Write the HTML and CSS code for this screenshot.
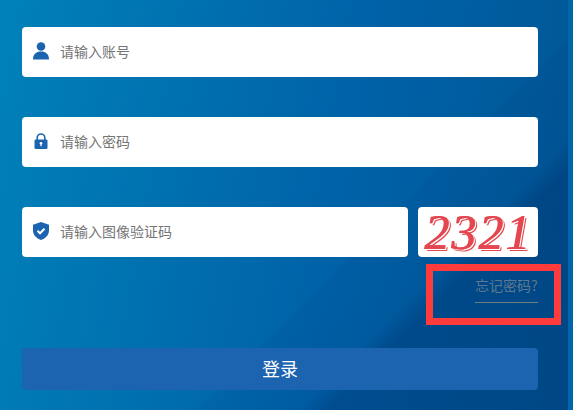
FILE: index.html
```html
<!DOCTYPE html>
<html lang="zh">
<head>
<meta charset="utf-8">
<title>登录</title>
<link rel="stylesheet" href="styles.css">
</head>
<body>
<form class="login">
  <div class="field">
    <svg class="icon" viewBox="0 0 16 18" width="16" height="18"><circle cx="8" cy="4.500" r="4.300"/><path d="M0 17.500C0 12 3.500 9.600 8 9.600s8 2.400 8 7.900z"/></svg>
    <span class="ph">请输入账号</span>
  </div>
  <div class="field">
    <svg class="icon" viewBox="0 0 14 16" width="14" height="16"><path d="M2.400 7V4.800a4.600 4.600 0 0 1 9.200 0V7h-1.600V4.800a3 3 0 0 0-6 0V7z"/><rect x="0.500" y="6.500" width="13" height="9.500" rx="1.200"/><circle cx="7" cy="10.200" r="1.300" fill="#fff"/><rect x="6.400" y="10.200" width="1.200" height="3" fill="#fff"/></svg>
    <span class="ph">请输入密码</span>
  </div>
  <div class="captcha-row">
    <div class="field field-code">
      <svg class="icon" viewBox="0 0 16 18" width="16" height="18"><path d="M8 0l8 2.800v5.400c0 4.600-3.200 8-8 9.800-4.800-1.800-8-5.200-8-9.800V2.800z"/><path class="tick" d="M4.500 8.800l2.500 2.500 4.500-4.500"/></svg>
      <span class="ph">请输入图像验证码</span>
    </div>
    <div class="captcha"><span class="digits">2321</span></div>
  </div>
  <div class="forgot-row">
    <div class="forgot-mark"><a class="forgot">忘记密码?</a></div>
  </div>
  <button class="submit" type="button">登录</button>
</form>
</body>
</html>
```
FILE: styles.css
```css
* { box-sizing: border-box; }
html, body { height: 100%; }
body {
  margin: 0;
  overflow: hidden;
  position: relative;
  background:
    linear-gradient(135deg, transparent 61.500%, rgba(0, 60, 130, 0.1) 62%, rgba(0, 50, 120, 0.12) 72%, rgba(0, 30, 90, 0.3) 75%, rgba(0, 30, 90, 0.25) 100%),
    linear-gradient(100deg, #0081b9 0%, #0072b0 28%, #0062a8 58%, #005593 100%);
  font-family: "Noto Sans CJK SC", "Liberation Sans", sans-serif;
}
body::after {
  content: "";
  position: absolute;
  top: 0;
  right: 0;
  bottom: 0;
  width: 5px;
  background: #0066ac;
}
.login {
  width: 516px;
  margin-left: 22px;
  padding-top: 27px;
  display: flex;
  flex-direction: column;
}
.field {
  height: 50px;
  margin-bottom: 40px;
  display: flex;
  align-items: center;
  padding: 0 0 2px 11px;
  background: #fff;
  border-radius: 4px;
}
.icon {
  flex: none;
  fill: #1c64b0;
}
.field .icon { width: 16px; margin-right: 11px; }
.ph {
  font-size: 14px;
  line-height: 20px;
  color: #757575;
}
.captcha-row {
  display: flex;
  gap: 10px;
}
.field-code {
  width: 386px;
  margin-bottom: 0;
}
.captcha {
  width: 120px;
  height: 50px;
  background: #fff;
  border-radius: 4px;
  display: flex;
  align-items: center;
  justify-content: center;
}
.digits {
  font-family: "Liberation Serif", serif;
  font-style: italic;
  font-size: 50px;
  line-height: 50px;
  letter-spacing: 2px;
  color: #e4474f;
  text-shadow: 1px 0 0 #e4474f, 2px 1px 0 #fff, 3px 2px 0 #e4474f;
}
.forgot-row {
  display: flex;
  justify-content: flex-end;
  margin-right: -23px;
  margin-top: 7px;
}
.forgot-mark {
  width: 135px;
  height: 61px;
  border: 7px solid #ff3b3b;
  display: flex;
  justify-content: flex-end;
  padding: 4px 16px 0 0;
}
.forgot {
  height: 28px;
  line-height: 20px;
  font-size: 14px;
  color: #5d788f;
  border-bottom: 1px solid #6f7f80;
  width: 63px;
  white-space: nowrap;
}
.tick { fill: none; stroke: #fff; stroke-width: 2; }
.submit {
  margin-top: 23px;
  height: 42px;
  border: 0;
  border-radius: 4px;
  background: #1c64b0;
  color: #fff;
  font-family: inherit;
  font-size: 18px;
  padding: 0 0 2px;
}
```
